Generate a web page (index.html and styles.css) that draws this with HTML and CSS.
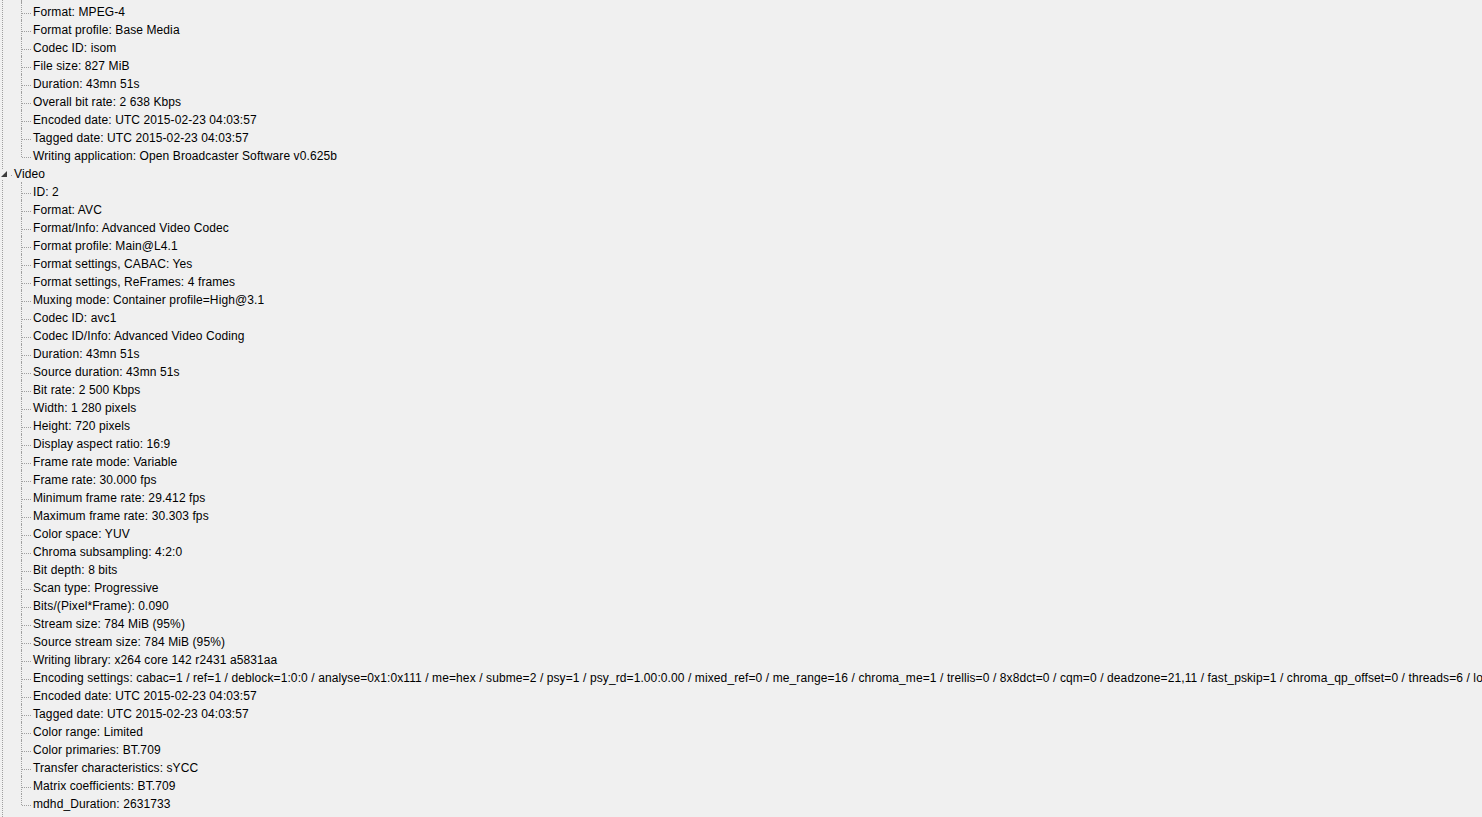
FILE: index.html
```html
<!DOCTYPE html>
<html lang="en">
<head>
    <meta charset="UTF-8">
    <title>MediaInfo - Tree</title>
    <link rel="stylesheet" href="styles.css">
</head>
<body>
    <div class="tree">
        <div class="branch">
            <!-- General section (its title is scrolled above the view) -->
            <ul class="children cont">
                <li>Format: MPEG-4</li>
                <li>Format profile: Base Media</li>
                <li>Codec ID: isom</li>
                <li>File size: 827 MiB</li>
                <li>Duration: 43mn 51s</li>
                <li>Overall bit rate: 2 638 Kbps</li>
                <li>Encoded date: UTC 2015-02-23 04:03:57</li>
                <li>Tagged date: UTC 2015-02-23 04:03:57</li>
                <li>Writing application: Open Broadcaster Software v0.625b</li>
            </ul>

            <div class="node">
                <span class="toggle">
                    <svg width="7" height="7" viewBox="0 0 7 7"><path d="M6 0 L6 6 L0 6 Z" fill="#3c3c3c"/></svg>
                </span>
                Video
            </div>
            <ul class="children">
                <li>ID: 2</li>
                <li>Format: AVC</li>
                <li>Format/Info: Advanced Video Codec</li>
                <li>Format profile: Main@L4.1</li>
                <li>Format settings, CABAC: Yes</li>
                <li>Format settings, ReFrames: 4 frames</li>
                <li>Muxing mode: Container profile=High@3.1</li>
                <li>Codec ID: avc1</li>
                <li>Codec ID/Info: Advanced Video Coding</li>
                <li>Duration: 43mn 51s</li>
                <li>Source duration: 43mn 51s</li>
                <li>Bit rate: 2 500 Kbps</li>
                <li>Width: 1 280 pixels</li>
                <li>Height: 720 pixels</li>
                <li>Display aspect ratio: 16:9</li>
                <li>Frame rate mode: Variable</li>
                <li>Frame rate: 30.000 fps</li>
                <li>Minimum frame rate: 29.412 fps</li>
                <li>Maximum frame rate: 30.303 fps</li>
                <li>Color space: YUV</li>
                <li>Chroma subsampling: 4:2:0</li>
                <li>Bit depth: 8 bits</li>
                <li>Scan type: Progressive</li>
                <li>Bits/(Pixel*Frame): 0.090</li>
                <li>Stream size: 784 MiB (95%)</li>
                <li>Source stream size: 784 MiB (95%)</li>
                <li>Writing library: x264 core 142 r2431 a5831aa</li>
                <li>Encoding settings: cabac=1 / ref=1 / deblock=1:0:0 / analyse=0x1:0x111 / me=hex / subme=2 / psy=1 / psy_rd=1.00:0.00 / mixed_ref=0 / me_range=16 / chroma_me=1 / trellis=0 / 8x8dct=0 / cqm=0 / deadzone=21,11 / fast_pskip=1 / chroma_qp_offset=0 / threads=6 / lookahead_threads=1 / sliced_threads=0 / nr=0 / decimate=1 / interlaced=0</li>
                <li>Encoded date: UTC 2015-02-23 04:03:57</li>
                <li>Tagged date: UTC 2015-02-23 04:03:57</li>
                <li>Color range: Limited</li>
                <li>Color primaries: BT.709</li>
                <li>Transfer characteristics: sYCC</li>
                <li>Matrix coefficients: BT.709</li>
                <li>mdhd_Duration: 2631733</li>
            </ul>
        </div>
    </div>
</body>
</html>
```

FILE: styles.css
```css
:root {
    --tree-bg: #F0F0F0;
    --tree-line: #A0A0A0;
}

body {
    margin: 0;
    background-color: var(--tree-bg);
    font-family: "Liberation Sans", Arial, sans-serif;
    font-size: 12px;
    letter-spacing: 0.1px;
    color: #000000;
}

.tree {
    height: 817px;
    overflow: hidden;
    padding-left: 2px;
}

.branch {
    min-height: 817px;
    border-left: 1px dotted var(--tree-line);
}

.children {
    list-style: none;
    margin: 0;
    padding: 0;
}

.children.cont {
    padding-top: 2px;
    position: relative;
}

.children.cont::before {
    content: "";
    position: absolute;
    left: 18px;
    top: 0;
    height: 2px;
    border-left: 1px dotted var(--tree-line);
}

.children li {
    position: relative;
    height: 18px;
    line-height: 20px;
    padding-left: 30px;
    white-space: nowrap;
}

/* vertical connector */
.children li::after {
    content: "";
    position: absolute;
    left: 18px;
    top: 0;
    height: 18px;
    border-left: 1px dotted var(--tree-line);
}

.children li:last-child::after {
    height: 11px;
}

/* horizontal connector */
.children li::before {
    content: "";
    position: absolute;
    left: 19px;
    top: 11px;
    width: 9px;
    border-top: 1px dotted var(--tree-line);
}

.node {
    position: relative;
    height: 18px;
    line-height: 20px;
    padding-left: 11px;
}

.node::before {
    content: "";
    position: absolute;
    left: 8px;
    top: 11px;
    width: 1px;
    border-top: 1px dotted var(--tree-line);
}

.toggle {
    position: absolute;
    left: -3px;
    top: 6px;
    width: 8px;
    height: 9px;
    background-color: var(--tree-bg);
    display: flex;
    align-items: center;
    justify-content: center;
}

.toggle svg {
    display: block;
}
```
